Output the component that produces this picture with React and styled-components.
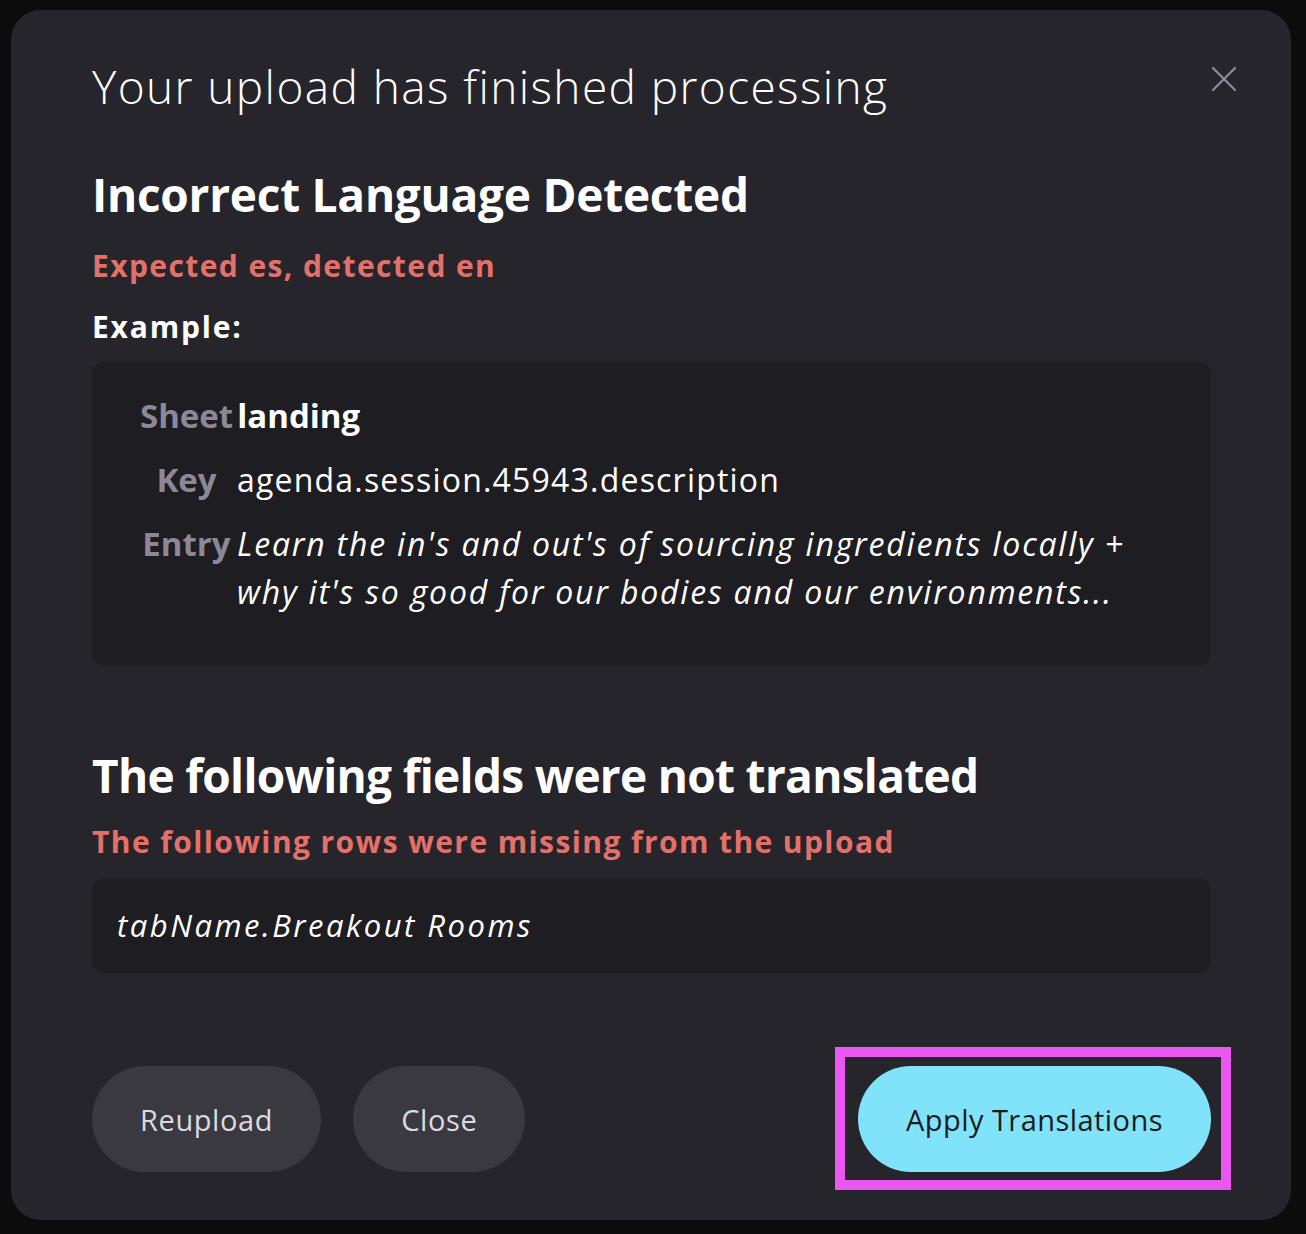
import React from "react";
import styled, { createGlobalStyle } from "styled-components";

const GlobalStyle = createGlobalStyle`
  html, body {
    margin: 0;
    padding: 0;
    background: #0c0c0d;
  }
  body {
    font-family: "Open Sans", "Noto Sans", sans-serif;
    color: #ffffff;
  }
`;

const CloseIcon = () => (
  <svg width="26" height="26" viewBox="0 0 26 26" fill="none">
    <path d="M2 2L24 24M24 2L2 24" stroke="#8f8c9b" strokeWidth="2.2" strokeLinecap="round" />
  </svg>
);

const UploadResultModal = () => {
  return (
    <Page>
      <Modal>
        <Header>
          <Title>Your upload has finished processing</Title>
          <CloseButton aria-label="Close">
            <CloseIcon />
          </CloseButton>
        </Header>

        <Section>
          <Heading>Incorrect Language Detected</Heading>
          <Warning>Expected es, detected en</Warning>
          <SubHeading>Example:</SubHeading>
          <ExampleBox>
            <SheetRow>
              <Label>Sheet</Label>
              <SheetName>landing</SheetName>
            </SheetRow>
            <DetailGrid>
              <Label>Key</Label>
              <Value>agenda.session.45943.description</Value>
              <Label>Entry</Label>
              <Value italic>
                Learn the in's and out's of sourcing ingredients locally + why it's so good for our bodies and our environments...
              </Value>
            </DetailGrid>
          </ExampleBox>
        </Section>

        <Section second>
          <Heading tight>The following fields were not translated</Heading>
          <Warning close>The following rows were missing from the upload</Warning>
          <MissingBox>tabName.Breakout Rooms</MissingBox>
        </Section>

        <Footer>
          <ButtonGroup>
            <Button>Reupload</Button>
            <Button>Close</Button>
          </ButtonGroup>
          <HighlightFrame>
            <Button primary>Apply Translations</Button>
          </HighlightFrame>
        </Footer>
      </Modal>
    </Page>
  );
};

const Page = styled.div`
  min-height: 1234px;
  padding: 10px 15px 14px 11px;
  box-sizing: border-box;
`;

const Modal = styled.div`
  width: 1280px;
  height: 1210px;
  box-sizing: border-box;
  background: #27252c;
  border-radius: 30px;
  padding: 48px 80px 48px 81px;
  display: flex;
  flex-direction: column;
`;

const Header = styled.div`
  display: flex;
  align-items: flex-start;
  justify-content: space-between;
  margin-right: -26px;
`;

const Title = styled.h1`
  margin: 0;
  font-size: 46px;
  font-weight: 300;
  line-height: 56px;
  letter-spacing: 1.4px;
  color: #ffffff;
`;

const CloseButton = styled.button`
  background: none;
  border: none;
  padding: 0;
  margin-top: 8px;
  cursor: pointer;
  display: flex;
`;

const Section = styled.div`
  display: flex;
  flex-direction: column;
  margin-top: ${(p) => (p.second ? "81px" : "52px")};
`;

const Heading = styled.h2`
  margin: 0;
  font-size: 46px;
  font-weight: 700;
  line-height: 56px;
  letter-spacing: ${(p) => (p.tight ? "-0.7px" : "-0.25px")};
`;

const Warning = styled.div`
  margin-top: ${(p) => (p.close ? "19px" : "24px")};
  font-size: 30px;
  font-weight: 700;
  line-height: 40px;
  letter-spacing: 1.4px;
  color: #e4706a;
`;

const SubHeading = styled.div`
  margin-top: 21px;
  font-size: 30px;
  font-weight: 700;
  line-height: 40px;
  letter-spacing: 1.8px;
`;

const ExampleBox = styled.div`
  margin-top: 15px;
  background: #1e1d22;
  border-radius: 12px;
  padding: 30px 48px 50px 48px;
  display: flex;
  flex-direction: column;
  gap: 16px;
`;

const SheetRow = styled.div`
  display: flex;
  line-height: 48px;
`;

const Label = styled.span`
  font-size: 33px;
  font-weight: 700;
  color: #8b8898;
  line-height: 48px;
  text-align: center;
`;

const SheetName = styled.span`
  font-size: 33px;
  font-weight: 700;
  color: #ffffff;
  margin-left: 4px;
`;

const DetailGrid = styled.div`
  display: grid;
  grid-template-columns: 93px 1fr;
  column-gap: 4px;
  row-gap: 16px;
`;

const Value = styled.span`
  font-size: 32px;
  font-weight: 400;
  font-style: ${(p) => (p.italic ? "italic" : "normal")};
  letter-spacing: ${(p) => (p.italic ? "1.8px" : "1.2px")};
  line-height: 48px;
  color: #ffffff;
`;

const MissingBox = styled.div`
  margin-top: 16px;
  background: #1e1d22;
  border-radius: 12px;
  padding: 24px 25px;
  font-size: 31px;
  font-style: italic;
  letter-spacing: 2.5px;
  line-height: 47px;
`;

const Footer = styled.div`
  margin-top: auto;
  display: flex;
  align-items: center;
  justify-content: space-between;
`;

const ButtonGroup = styled.div`
  display: flex;
  gap: 32px;
`;

const HighlightFrame = styled.div`
  display: flex;
  border: 10px solid #e957f0;
  padding: 9px 10px 8px 13px;
  margin: -19px -20px -18px 0;
`;

const Button = styled.button`
  height: 106px;
  padding: 0 48px;
  border: none;
  border-radius: 53px;
  font-family: inherit;
  font-size: 29px;
  font-weight: 400;
  letter-spacing: ${(p) => (p.primary ? "0.45px" : "0.6px")};
  cursor: pointer;
  background: ${(p) => (p.primary ? "#80e3f9" : "#3a393f")};
  color: ${(p) => (p.primary ? "#1c1b20" : "#dcdae1")};
`;

export default function App() {
  return (
    <>
      <GlobalStyle />
      <UploadResultModal />
    </>
  );
}
